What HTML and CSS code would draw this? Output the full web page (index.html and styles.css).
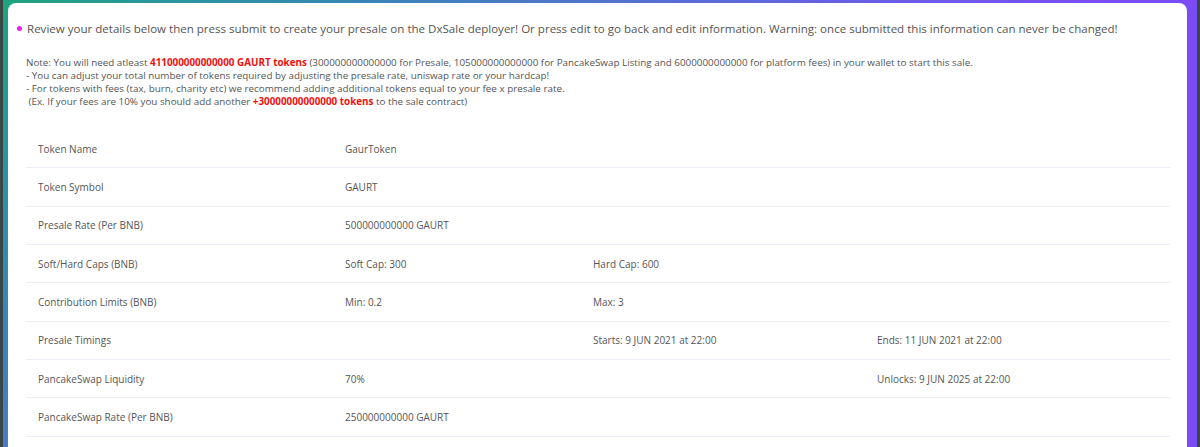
FILE: index.html
```html
<!DOCTYPE html>
<html lang="en">
  <head>
    <meta charset="UTF-8" />
    <meta name="viewport" content="width=device-width, initial-scale=1.0" />
    <title>Review Presale</title>
    <link rel="stylesheet" href="styles.css">
  </head>
  <body>
    <div class="page">
      <div class="card">
        <p class="intro">
          <span class="dot"></span>
          Review your details below then press submit to create your presale on the DxSale deployer! Or press edit to go back and edit information. Warning: once submitted this information can never be changed!
        </p>

        <div class="note">
          Note: You will need atleast <span class="red">411000000000000 GAURT tokens</span> (300000000000000 for Presale, 105000000000000 for PancakeSwap Listing and 6000000000000 for platform fees) in your wallet to start this sale.<br />
          - You can adjust your total number of tokens required by adjusting the presale rate, uniswap rate or your hardcap!<br />
          - For tokens with fees (tax, burn, charity etc) we recommend adding additional tokens equal to your fee x presale rate.<br />
          &nbsp;(Ex. If your fees are 10% you should add another <span class="red">+30000000000000 tokens</span> to the sale contract)
        </div>

        <div class="details">
          <div class="row">
            <div>Token Name</div>
            <div>GaurToken</div>
            <div></div>
            <div></div>
          </div>
          <div class="row">
            <div>Token Symbol</div>
            <div>GAURT</div>
            <div></div>
            <div></div>
          </div>
          <div class="row">
            <div>Presale Rate (Per BNB)</div>
            <div>500000000000 GAURT</div>
            <div></div>
            <div></div>
          </div>
          <div class="row">
            <div>Soft/Hard Caps (BNB)</div>
            <div>Soft Cap: 300</div>
            <div>Hard Cap: 600</div>
            <div></div>
          </div>
          <div class="row">
            <div>Contribution Limits (BNB)</div>
            <div>Min: 0.2</div>
            <div>Max: 3</div>
            <div></div>
          </div>
          <div class="row">
            <div>Presale Timings</div>
            <div></div>
            <div>Starts: 9 JUN 2021 at 22:00</div>
            <div>Ends: 11 JUN 2021 at 22:00</div>
          </div>
          <div class="row">
            <div>PancakeSwap Liquidity</div>
            <div>70%</div>
            <div></div>
            <div>Unlocks: 9 JUN 2025 at 22:00</div>
          </div>
          <div class="row">
            <div>PancakeSwap Rate (Per BNB)</div>
            <div>250000000000 GAURT</div>
            <div></div>
            <div></div>
          </div>
        </div>
      </div>
    </div>
  </body>
</html>
```

FILE: styles.css
```css
body {
  font-family: "Open Sans", Arial, sans-serif;
  margin: 0;
  padding: 0;
  height: 447px;
  overflow: hidden;
  background-color: #3b4747;
}

.page {
  margin: 0 3px;
  height: 447px;
  padding: 3px 10px 0 5px;
  box-sizing: border-box;
  background: linear-gradient(139deg, #1fa37c 0%, #2b95a0 10%, #3a84b8 22%, #4a7bc4 30%, #6562e2 48%, #7b4cf6 65%);
}

.card {
  background-color: white;
  border-radius: 8px 8px 0 0;
  height: 100%;
  padding: 17px 17px 0 9px;
  box-sizing: border-box;
  color: #555;
}

.intro {
  margin: 0;
  font-size: 11.55px;
  line-height: 17px;
  display: flex;
  align-items: center;
  white-space: nowrap;
}

.dot {
  width: 5px;
  height: 5px;
  border-radius: 50%;
  background-color: #f01ef0;
  margin-right: 5px;
  flex-shrink: 0;
}

.note {
  margin-top: 19px;
  padding-left: 9px;
  font-size: 9.85px;
  line-height: 13px;
}

.red {
  color: #f01010;
  font-weight: bold;
}

.details {
  margin-top: 22px;
  margin-left: 9px;
  font-size: 10px;
}

.row {
  display: grid;
  grid-template-columns: 307px 248px 284px 1fr;
  height: 38.35px;
  box-sizing: border-box;
  align-items: center;
  border-bottom: 1px solid #eceef8;
}

.row div {
  padding-left: 12px;
}
```
